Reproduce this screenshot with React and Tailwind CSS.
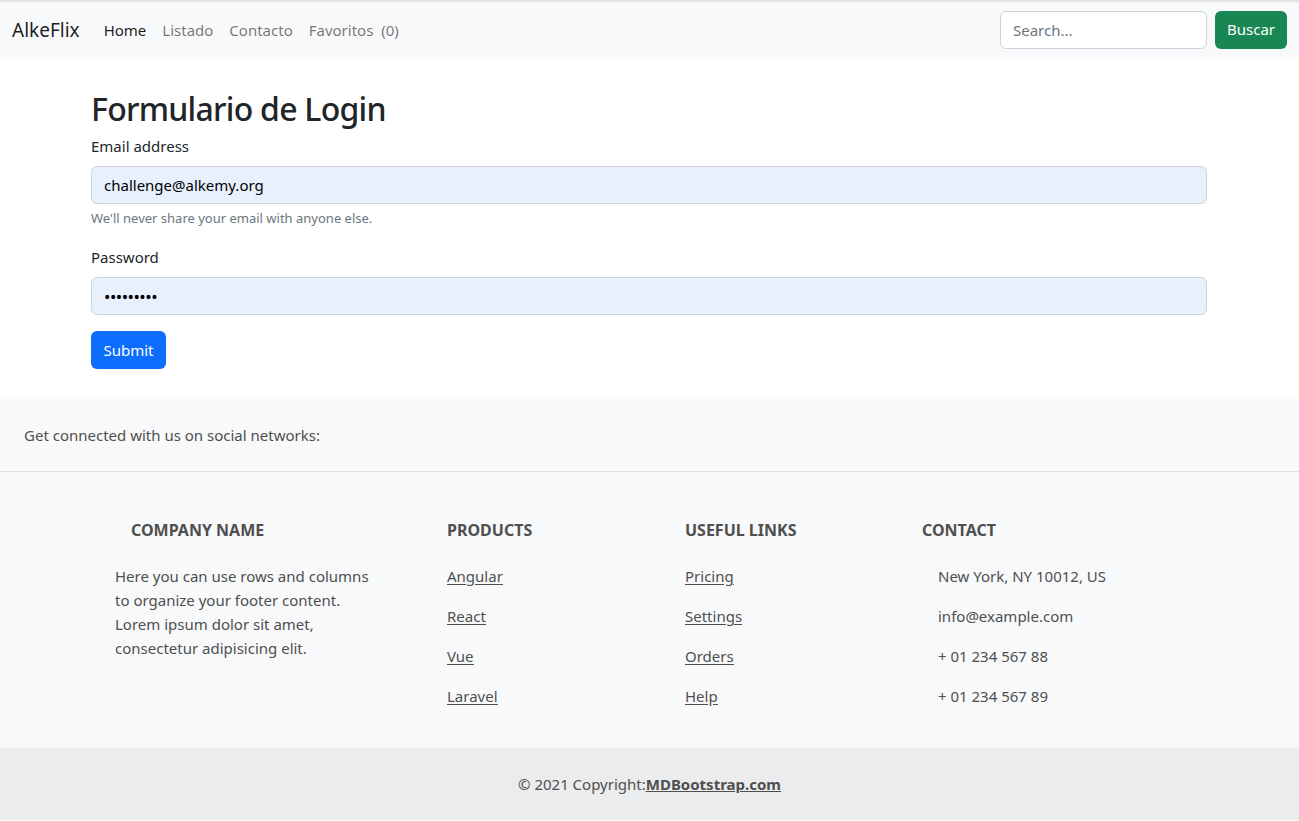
import { useState } from 'react';

function Navbar() {
  return (
    <nav className="border-t-2 border-[#e4e4e4] bg-[#f8f9fa]">
      <div className="flex h-[55px] items-center justify-between px-3">
        <div className="flex items-center pt-[1px]">
          <a href="#" className="mr-4 text-[19px] text-[rgba(0,0,0,0.9)]">AlkeFlix</a>
          <ul className="flex items-center text-[15px]">
            <li><a href="#" className="px-2 text-[rgba(0,0,0,0.9)]">Home</a></li>
            <li><a href="#" className="px-2 text-[rgba(0,0,0,0.55)]">Listado</a></li>
            <li><a href="#" className="px-2 text-[rgba(0,0,0,0.55)]">Contacto</a></li>
            <li><a href="#" className="px-2 text-[rgba(0,0,0,0.55)]">Favoritos <span className="ml-1">(0)</span></a></li>
          </ul>
        </div>
        <form className="flex items-center gap-2" onSubmit={(e) => e.preventDefault()}>
          <input
            type="text"
            placeholder="Search..."
            className="h-[38px] w-[207px] rounded-[6px] border border-[#ced4da] bg-white px-3 text-[15px] text-[#212529] placeholder:text-[#6c757d] focus:outline-none"
          />
          <button type="submit" className="h-[38px] w-[72px] rounded-[6px] bg-[#198754] text-[15px] text-white">Buscar</button>
        </form>
      </div>
    </nav>
  );
}

function LoginForm() {
  const [email, setEmail] = useState('challenge@alkemy.org');
  const [password, setPassword] = useState('react1234');

  return (
    <div className="ml-[91px] w-[1116px] pt-[32px] pb-[30px]">
      <h1 className="mb-[5px] text-[32px] leading-[40px] font-medium tracking-[-0.75px] text-[#212529]">Formulario de Login</h1>
      <form onSubmit={(e) => e.preventDefault()}>
        <div className="mb-4">
          <label className="mb-2 block text-[15px] leading-6 text-[#212529]">Email address</label>
          <input
            type="email"
            value={email}
            onChange={(e) => setEmail(e.target.value)}
            className="h-[38px] w-full rounded-[6px] border border-[#ced4da] bg-[#e8f0fe] px-3 text-[15px] text-black focus:outline-none"
          />
          <div className="mt-1 text-[13px] leading-[21px] text-[#6c757d]">We'll never share your email with anyone else.</div>
        </div>
        <div className="mb-4">
          <label className="mb-2 block text-[15px] leading-6 text-[#212529]">Password</label>
          <input
            type="password"
            value={password}
            onChange={(e) => setPassword(e.target.value)}
            className="h-[38px] w-full rounded-[6px] border border-[#ced4da] bg-[#e8f0fe] px-3 text-[17px] tracking-[-0.5px] text-black focus:outline-none"
          />
        </div>
        <button type="submit" className="h-[38px] w-[75px] rounded-[6px] bg-[#0d6efd] text-[15px] text-white">Submit</button>
      </form>
    </div>
  );
}

function Footer() {
  const linkClass = 'mb-4 leading-6 text-[#4f4f4f] underline underline-offset-2';
  return (
    <footer className="bg-[#f8f9fa] text-[15px] text-[#4f4f4f]">
      <section className="border-b border-[#dee2e6] p-6 leading-6">
        <span>Get connected with us on social networks:</span>
      </section>
      <section className="flex pt-[49px] pl-[115px]">
        <div className="mb-6 w-[332px]">
          <h6 className="mb-6 pl-4 text-[16px] leading-[19px] font-bold uppercase">Company name</h6>
          <p className="w-[265px] leading-6">
            Here you can use rows and columns to organize your footer content. Lorem ipsum dolor sit amet, consectetur adipisicing elit.
          </p>
        </div>
        <div className="mb-6 w-[238px]">
          <h6 className="mb-6 text-[16px] leading-[19px] font-bold uppercase">Products</h6>
          <p className={linkClass}><a href="#">Angular</a></p>
          <p className={linkClass}><a href="#">React</a></p>
          <p className={linkClass}><a href="#">Vue</a></p>
          <p className={linkClass}><a href="#">Laravel</a></p>
        </div>
        <div className="mb-6 w-[237px]">
          <h6 className="mb-6 text-[16px] leading-[19px] font-bold uppercase">Useful links</h6>
          <p className={linkClass}><a href="#">Pricing</a></p>
          <p className={linkClass}><a href="#">Settings</a></p>
          <p className={linkClass}><a href="#">Orders</a></p>
          <p className={linkClass}><a href="#">Help</a></p>
        </div>
        <div className="mb-6">
          <h6 className="mb-6 text-[16px] leading-[19px] font-bold uppercase">Contact</h6>
          <p className="mb-4 pl-4 leading-6">New York, NY 10012, US</p>
          <p className="mb-4 pl-4 leading-6">info@example.com</p>
          <p className="mb-4 pl-4 leading-6">+ 01 234 567 88</p>
          <p className="mb-4 pl-4 leading-6">+ 01 234 567 89</p>
        </div>
      </section>
      <div className="bg-[rgba(0,0,0,0.05)] p-6 text-center leading-6">
        © 2021 Copyright:
        <a href="#" className="font-bold text-[#4f4f4f] underline">MDBootstrap.com</a>
      </div>
    </footer>
  );
}

export default function App() {
  return (
    <div className="min-h-screen bg-white font-['Noto_Sans',sans-serif] text-[#212529]">
      <Navbar />
      <LoginForm />
      <Footer />
    </div>
  );
}
